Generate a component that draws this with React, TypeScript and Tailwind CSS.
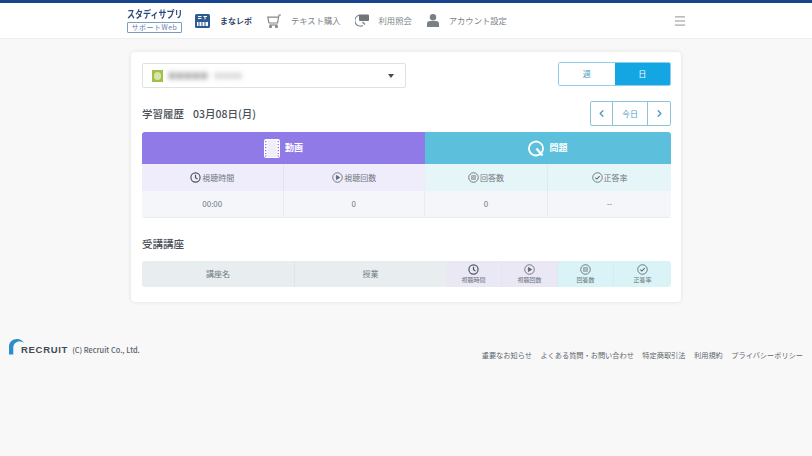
import { ChevronLeft, ChevronRight, Menu } from "lucide-react";

const cjk = "font-['Noto_Sans_CJK_JP','Noto_Sans',sans-serif]";

function ClockIcon({ size = 11 }: { size?: number }) {
  return (
    <svg width={size} height={size} viewBox="0 0 12 12" fill="none" stroke="#4a5560" strokeWidth="1.3">
      <circle cx="6" cy="6" r="5" />
      <path d="M6 3v3.2l2.2 1.4" />
    </svg>
  );
}

function PlayIcon({ size = 11 }: { size?: number }) {
  return (
    <svg width={size} height={size} viewBox="0 0 12 12" fill="none" stroke="#5a6570" strokeWidth="0.9">
      <circle cx="6" cy="6" r="5.2" />
      <path d="M4.8 3.8v4.4L8.3 6z" fill="#5a6570" />
    </svg>
  );
}

function AnswerIcon({ size = 11 }: { size?: number }) {
  return (
    <svg width={size} height={size} viewBox="0 0 12 12" fill="none" stroke="#5a6570" strokeWidth="0.9">
      <circle cx="6" cy="6" r="5.2" />
      <rect x="3.4" y="3.6" width="5.2" height="4.8" rx="0.6" fill="#8a949c" stroke="none" />
      <path d="M4 5h4M4 6.2h4M4 7.4h4" stroke="#e6f5f8" strokeWidth="0.5" />
    </svg>
  );
}

function CheckIcon({ size = 11 }: { size?: number }) {
  return (
    <svg width={size} height={size} viewBox="0 0 12 12" fill="none" stroke="#5a6570" strokeWidth="0.9">
      <circle cx="6" cy="6" r="5.2" />
      <path d="M3.6 6.1l1.7 1.7 3.1-3.3" strokeWidth="1.1" />
    </svg>
  );
}

function FilmIcon() {
  return (
    <svg width="16" height="19" viewBox="0 0 16 19">
      <rect width="16" height="19" rx="2" fill="#fff" />
      <rect x="3.5" y="1" width="9" height="17" fill="#f1eefc" />
      {[2, 5, 8, 11, 14, 16.5].map((y) => (
        <g key={y} fill="#8f7ae8">
          <rect x="1" y={y} width="1.4" height="1.2" />
          <rect x="13.6" y={y} width="1.4" height="1.2" />
        </g>
      ))}
    </svg>
  );
}

function QuestionIcon() {
  return (
    <svg width="16" height="17" viewBox="0 0 16 17" fill="none" stroke="#fff" strokeWidth="1.8">
      <path d="M13.2 13.2A7 7 0 1 1 15 8.4c0 1.6-.5 3-1.4 4.2" />
      <path d="M8.5 8.5l6 7" strokeWidth="2.4" />
    </svg>
  );
}

function NavItem({ icon, label, active }: { icon: React.ReactNode; label: string; active?: boolean }) {
  return (
    <div className="flex items-center gap-[10px]">
      {icon}
      <span className={active ? "text-[8px] font-bold text-[#33476b]" : "text-[8.3px] text-[#7d848a] whitespace-nowrap"}>{label}</span>
    </div>
  );
}

function Header() {
  return (
    <header className="h-[39px] bg-white border-t-[3px] border-t-[#17458f] border-b border-b-[#eeeeee] flex items-center pl-[127px] pr-[125px]">
      <div className="w-[55px] flex flex-col items-stretch mr-[13px]">
        <span className="text-[8px] leading-[12px] font-bold text-[#2c4a7c] whitespace-nowrap scale-y-125 origin-center">スタディサプリ</span>
        <span className="mt-[2px] h-[11px] text-[7px] leading-[9px] text-center text-[#5f7fa8] border border-[#7d9cc0] rounded-[1px] tracking-[0.5px] whitespace-nowrap">サポートWeb</span>
      </div>
      <NavItem
        active
        label="まなレポ"
        icon={
          <svg width="15" height="14" viewBox="0 0 15 14">
            <rect width="15" height="14" rx="1.5" fill="#2c5a94" />
            <path d="M3 2.5h3.5M3 4.5h3.5M8.5 2.5H12M10 2.5v3" stroke="#fff" strokeWidth="1" />
            <rect x="2" y="8" width="11" height="4" fill="#fff" />
            <path d="M4 8v4M7 8v4M10 8v4" stroke="#2c5a94" strokeWidth="1" />
          </svg>
        }
      />
      <div className="ml-[15px]">
        <NavItem
          label="テキスト購入"
          icon={
            <svg width="14" height="14" viewBox="0 0 14 14" fill="none" stroke="#81878c" strokeWidth="1.2">
              <path d="M14 1h-2l-1.5 8H2L.8 3.2H11.6" />
              <path d="M2.5 11h8" />
              <circle cx="3.5" cy="12.6" r="0.9" fill="#81878c" />
              <circle cx="9.5" cy="12.6" r="0.9" fill="#81878c" />
            </svg>
          }
        />
      </div>
      <div className="ml-[14px]">
        <NavItem
          label="利用照会"
          icon={
            <svg width="14" height="13" viewBox="0 0 14 13">
              <path d="M8 11.5A5.5 5.5 0 1 1 5 1.2" fill="none" stroke="#81878c" strokeWidth="1.2" />
              <rect x="4" y="0.5" width="10" height="6.5" rx="1" fill="#6f757a" />
              <path d="M7.5 8l2.5 2.5" stroke="#81878c" strokeWidth="1.5" />
            </svg>
          }
        />
      </div>
      <div className="ml-[15px]">
        <NavItem
          label="アカウント設定"
          icon={
            <svg width="12" height="13" viewBox="0 0 12 13" fill="#787f85">
              <circle cx="6" cy="3.2" r="3.2" />
              <path d="M0 13V9.5C0 7.8 1.4 7 3 7h6c1.6 0 3 .8 3 2.5V13z" />
            </svg>
          }
        />
      </div>
      <Menu className="ml-auto text-[#7f858a]" size={14} strokeWidth={1.5} />
    </header>
  );
}

function HistoryTable() {
  return (
    <div className="mt-[6px] rounded-[3px] overflow-hidden text-[8px] text-[#6f777e]">
      <div className="grid grid-cols-[283px_246px] h-[32px] font-bold text-white text-[9px]">
        <div className="bg-[#8f7ae8] flex items-center justify-center gap-[5px]">
          <FilmIcon />
          動画
        </div>
        <div className="bg-[#5cbfdb] flex items-center justify-center gap-[5px]">
          <QuestionIcon />
          問題
        </div>
      </div>
      <div className="grid grid-cols-[141.5px_141.5px_123px_123px] h-[27px]">
        <div className="bg-[#efecfb] flex items-center justify-center gap-[1px] border-r border-[#e4e2f2]">
          <ClockIcon />
          視聴時間
        </div>
        <div className="bg-[#efecfb] flex items-center justify-center gap-[1px]">
          <PlayIcon />
          視聴回数
        </div>
        <div className="bg-[#e6f5f8] flex items-center justify-center gap-[1px] border-r border-[#dcebef]">
          <AnswerIcon />
          回答数
        </div>
        <div className="bg-[#e6f5f8] flex items-center justify-center gap-[1px]">
          <CheckIcon />
          正答率
        </div>
      </div>
      <div className="grid grid-cols-[141.5px_141.5px_123px_123px] h-[27px] bg-[#f5f6fa] border-b border-[#e8ecef]">
        <div className="flex items-center justify-center border-r border-[#e8ecef]">00:00</div>
        <div className="flex items-center justify-center border-r border-[#e8ecef]">0</div>
        <div className="flex items-center justify-center border-r border-[#e8ecef]">0</div>
        <div className="flex items-center justify-center">--</div>
      </div>
    </div>
  );
}

function CourseHead({ icon, label, bg }: { icon: React.ReactNode; label: string; bg: string }) {
  return (
    <div className={`flex flex-col items-center justify-center border-r border-[#e2e6ee] last:border-r-0 ${bg}`}>
      {icon}
      <span className="text-[6px] leading-[10px] text-[#69737a] whitespace-nowrap">{label}</span>
    </div>
  );
}

export default function App() {
  return (
    <div className={`min-h-[456px] bg-[#f8f8f8] ${cjk} overflow-hidden`}>
      <Header />
      <main className="w-[550px] ml-[131px] mt-[13px] h-[250px] bg-white rounded-[4px] shadow-[0_0_4px_rgba(0,0,0,0.1)] pt-[10px] px-[11px] pr-[10px]">
        <div className="flex justify-between">
          <div className="w-[264px] h-[25px] mt-[1px] border border-[#dfe2e4] rounded-[2px] flex items-center pl-[9px] pr-[11px]">
            <div className="w-[11px] h-[12px] bg-[#9fc14a] flex items-center justify-center">
              <div className="w-[7px] h-[8px] rounded-full bg-[#d6e4a8]" />
            </div>
            <span className="ml-[5px] text-[8px] text-[#a8a8a8] blur-[2.5px]">■■■■■</span>
            <span className="ml-[6px] text-[7px] text-[#d0d0d0] blur-[2.5px]">■■■■</span>
            <span className="ml-auto w-0 h-0 border-x-[3px] border-x-transparent border-t-[4px] border-t-[#4a4a4a]" />
          </div>
          <div className="w-[113px] h-[24px] grid grid-cols-2 rounded-[2px] border border-[#8fcde8] overflow-hidden text-[8px]">
            <div className="flex items-center justify-center bg-white text-[#4b9cc4]">週</div>
            <div className="flex items-center justify-center bg-[#14a5e3] text-white">日</div>
          </div>
        </div>

        <div className="flex items-center justify-between mt-[13px] h-[25px]">
          <h2 className="text-[10.5px] font-medium text-[#4a5058] whitespace-nowrap flex gap-[9px]">
            <span>学習履歴</span>
            <span>03月08日(月)</span>
          </h2>
          <div className="w-[81px] h-[25px] flex rounded-[2px] border border-[#8cc4d8] text-[#4b9cc4] text-[8px]">
            <div className="w-[22px] flex items-center justify-center border-r border-[#8cc4d8]">
              <ChevronLeft size={11} strokeWidth={3} />
            </div>
            <div className="flex-1 flex items-center justify-center border-r border-[#8cc4d8]">今日</div>
            <div className="w-[22px] flex items-center justify-center">
              <ChevronRight size={11} strokeWidth={3} />
            </div>
          </div>
        </div>

        <HistoryTable />

        <h2 className="mt-[18px] text-[10.5px] leading-[16px] font-medium text-[#4a5058]">受講講座</h2>
        <div className="mt-[9px] h-[26px] grid grid-cols-[153px_151px_56px_56px_56px_57px] rounded-[3px] overflow-hidden text-[8px] text-[#6f777e]">
          <div className="bg-[#e8eef0] flex items-center justify-center border-r border-[#e0e6e8]">講座名</div>
          <div className="bg-[#e8eef0] flex items-center justify-center">授業</div>
          <CourseHead icon={<ClockIcon />} label="視聴時間" bg="bg-[#ebe8f6]" />
          <CourseHead icon={<PlayIcon />} label="視聴回数" bg="bg-[#ebe8f6]" />
          <CourseHead icon={<AnswerIcon />} label="回答数" bg="bg-[#d9f3f7]" />
          <CourseHead icon={<CheckIcon />} label="正答率" bg="bg-[#d9f3f7]" />
        </div>
      </main>

      <footer className="flex justify-between mt-[36px] pl-[9px] pr-[9px]">
        <div className="flex items-end h-[17px]">
          <svg width="15" height="16" viewBox="0 0 15 16" className="shrink-0">
            <path d="M0 15.5V7.5C0 3 3.5 0 8 0c3 0 5.5 1.3 7 4-1.5-1-3-1.4-4.6-1.4C7 2.6 4.3 5 4.3 9v6.5z" fill="#2a8fc9" />
          </svg>
          <span className="-ml-[3px] font-['Liberation_Sans',sans-serif] text-[9.5px] leading-[10px] font-bold tracking-[0.7px] text-[#3f4a55]">RECRUIT</span>
          <span className="ml-[4px] text-[7.4px] leading-[10px] text-[#59626a] font-medium whitespace-nowrap">(C) Recruit Co., Ltd.</span>
        </div>
        <nav className="flex gap-[8.5px] mt-[11px] h-[12px] items-center text-[7.2px] text-[#5f666c] whitespace-nowrap">
          <span>重要なお知らせ</span>
          <span>よくある質問・お問い合わせ</span>
          <span>特定商取引法</span>
          <span>利用規約</span>
          <span>プライバシーポリシー</span>
        </nav>
      </footer>
    </div>
  );
}
